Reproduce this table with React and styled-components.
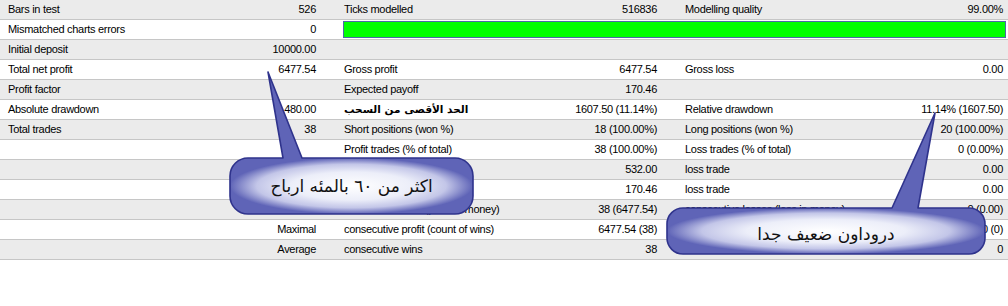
import React, { useId } from "react";
import styled, { createGlobalStyle } from "styled-components";

const GlobalStyle = createGlobalStyle`
  html, body {
    margin: 0;
    padding: 0;
    background: #fff;
  }
`;

const rows = [
  [["Bars in test", "526"], ["Ticks modelled", "516836"], ["Modelling quality", "99.00%"]],
  "bar",
  [["Initial deposit", "10000.00"], ["", ""], ["", ""]],
  [["Total net profit", "6477.54"], ["Gross profit", "6477.54"], ["Gross loss", "0.00"]],
  [["Profit factor", ""], ["Expected payoff", "170.46"], ["", ""]],
  [["Absolute drawdown", "480.00"], ["الحد الأقصى من السحب", "1607.50 (11.14%)", true], ["Relative drawdown", "11.14% (1607.50)"]],
  [["Total trades", "38"], ["Short positions (won %)", "18 (100.00%)"], ["Long positions (won %)", "20 (100.00%)"]],
  [["", ""], ["Profit trades (% of total)", "38 (100.00%)"], ["Loss trades (% of total)", "0 (0.00%)"]],
  [["", "Largest"], ["profit trade", "532.00"], ["loss trade", "0.00"]],
  [["", "Average"], ["profit trade", "170.46"], ["loss trade", "0.00"]],
  [["", "Maximum"], ["consecutive wins (profit in money)", "38 (6477.54)"], ["consecutive losses (loss in money)", "0 (0.00)"]],
  [["", "Maximal"], ["consecutive profit (count of wins)", "6477.54 (38)"], ["consecutive loss (count of losses)", "0 (0)"]],
  [["", "Average"], ["consecutive wins", "38"], ["consecutive losses", "0"]],
];

const Report = styled.div`
  position: relative;
  width: 1008px;
  height: 306px;
  overflow: hidden;
  font-family: "Liberation Sans", Arial, sans-serif;
  font-size: 11px;
  letter-spacing: -0.3px;
  color: #000;
`;

const Row = styled.div`
  display: grid;
  grid-template-columns: 320px 322px 1fr;
  column-gap: 20px;
  height: 19px;
  border-bottom: 1px solid #c6c6c6;
  background: ${(p) => (p.$alt ? "#ebebeb" : "#fff")};
`;

const pads = ["0 4px 0 8px", "0 5px 0 4px", "0 5px 0 3px"];

const Cell = styled.div`
  display: flex;
  align-items: center;
  justify-content: space-between;
  padding: ${(p) => pads[p.$col]};
  white-space: nowrap;
  line-height: 19px;
`;

const Label = styled.span`
  ${(p) =>
    p.$arabic &&
    `
    font-family: "DejaVu Sans", sans-serif;
    font-weight: bold;
    font-size: 10.5px;
    letter-spacing: 0;
  `}
`;

const Value = styled.span`
  margin-left: auto;
`;

const QualityBar = styled.div`
  grid-column: 2 / 4;
  align-self: center;
  height: 15px;
  margin: 0 2px 0 3px;
  background: #00ff00;
  border: 1px solid #4a6aa6;
`;

const CalloutBox = styled.div`
  position: absolute;
  left: ${(p) => p.$x}px;
  top: ${(p) => p.$y}px;
  width: ${(p) => p.$w}px;
  height: ${(p) => p.$h}px;
  display: flex;
  align-items: center;
  justify-content: center;
  padding-top: ${(p) => p.$shift || 0}px;
  box-sizing: border-box;
`;

const CalloutShape = styled.svg`
  position: absolute;
  left: 0;
  top: 0;
  overflow: visible;
`;

const CalloutText = styled.span`
  position: relative;
  direction: rtl;
  font-family: "DejaVu Sans", serif;
  font-size: ${(p) => p.$size}px;
  letter-spacing: 0;
  color: #111;
  white-space: nowrap;
`;

function Callout({ x, y, w, h, r, tail, size, shift, children }) {
  const id = useId().replace(/:/g, "");
  const { a, b, tx, ty } = tail;
  const d = `M ${r} 0 L ${a} 0 L ${tx} ${ty} L ${b} 0 L ${w - r} 0 A ${r} ${r} 0 0 1 ${w} ${r} L ${w} ${h - r} A ${r} ${r} 0 0 1 ${w - r} ${h} L ${r} ${h} A ${r} ${r} 0 0 1 0 ${h - r} L 0 ${r} A ${r} ${r} 0 0 1 ${r} 0 Z`;
  return (
    <CalloutBox $x={x} $y={y} $w={w} $h={h} $shift={shift}>
      <CalloutShape width={w} height={h}>
        <defs>
          <radialGradient
            id={id}
            gradientUnits="userSpaceOnUse"
            cx={w / 2}
            cy={h / 2}
            r={w / 2}
            gradientTransform={`translate(${w / 2} ${h / 2}) scale(1 ${h / w}) translate(${-w / 2} ${-h / 2})`}
          >
            <stop offset="0" stopColor="#ffffff" />
            <stop offset="0.5" stopColor="#eceef9" />
            <stop offset="0.78" stopColor="#c3c6e8" />
            <stop offset="1" stopColor="#5f64b7" />
          </radialGradient>
        </defs>
        <path d={d} fill={`url(#${id})`} stroke="#2f338c" strokeWidth="1.6" strokeLinejoin="round" />
      </CalloutShape>
      <CalloutText $size={size}>{children}</CalloutText>
    </CalloutBox>
  );
}

export default function App() {
  return (
    <>
      <GlobalStyle />
      <Report>
        {rows.map((row, i) =>
          row === "bar" ? (
            <Row key={i} $alt={i % 2 === 0}>
              <Cell $col={0}>
                <Label>Mismatched charts errors</Label>
                <Value>0</Value>
              </Cell>
              <QualityBar />
            </Row>
          ) : (
            <Row key={i} $alt={i % 2 === 0}>
              {row.map(([label, value, arabic], c) => (
                <Cell key={c} $col={c}>
                  <Label $arabic={arabic} dir={arabic ? "rtl" : undefined}>
                    {label}
                  </Label>
                  <Value>{value}</Value>
                </Cell>
              ))}
            </Row>
          )
        )}

        <Callout x={230} y={158} w={243} h={56} r={18} size={17} shift={0} tail={{ a: 53, b: 72, tx: 38, ty: -86 }}>
          اكثر من ٦٠ بالمئه ارباح
        </Callout>
        <Callout x={667} y={208} w={318} h={46} r={16} size={17} shift={6} tail={{ a: 225, b: 251, tx: 268, ty: -95 }}>
          دروداون ضعيف جدا
        </Callout>
      </Report>
    </>
  );
}
